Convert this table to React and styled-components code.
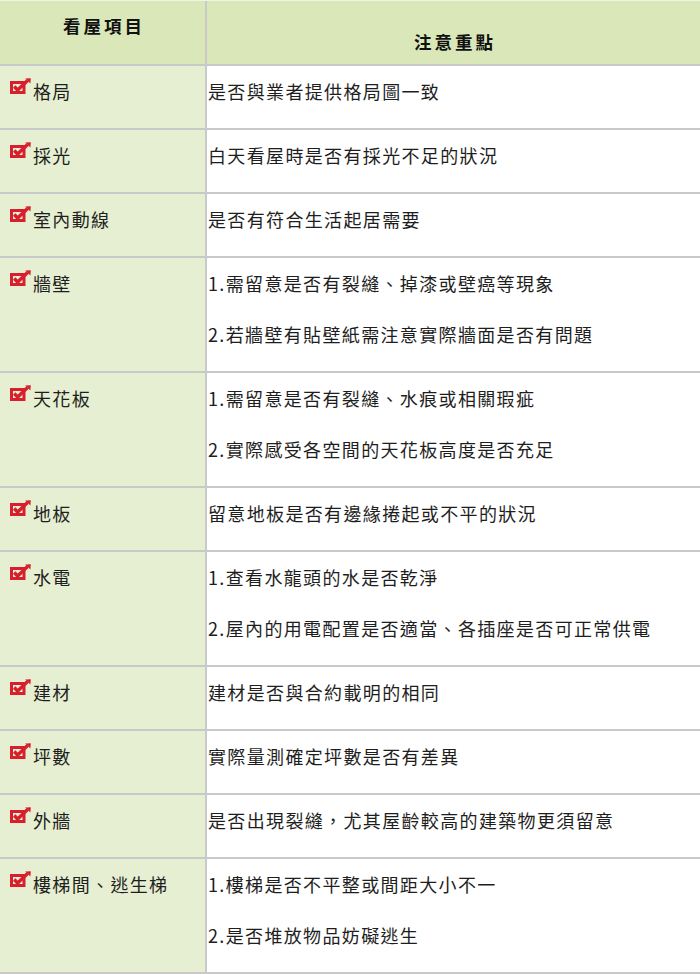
import React from "react";
import styled, { createGlobalStyle } from "styled-components";

const Global = createGlobalStyle`
  html, body { margin: 0; padding: 0; background: #fff; }
  body { font-family: "Noto Sans CJK TC", "Noto Sans", sans-serif; }
`;

const Table = styled.div`
  width: 700px;
  display: flex;
  flex-direction: column;
  border-top: 1px solid #eef3e6;
`;

const Row = styled.div`
  display: grid;
  grid-template-columns: 207px 1fr;
  border-bottom: 2px solid #c9c9c9;
`;

const HeadCell = styled.div`
  box-sizing: border-box;
  height: 63px;
  background: #d9e7b9;
  border-right: ${(p) => (p.$first ? "2px solid #c9c9c9" : "none")};
  display: flex;
  justify-content: center;
  align-items: flex-start;
  padding-top: ${(p) => p.$top}px;
  padding-left: 3px;
  font-size: 17.5px;
  font-weight: 700;
  letter-spacing: 3px;
  line-height: 24px;
  color: #111;
`;

const ItemCell = styled.div`
  box-sizing: border-box;
  background: #e6efd1;
  border-right: 2px solid #c9c9c9;
  display: flex;
  align-items: flex-start;
  gap: 2px;
  padding: 10px 0 22px 10px;
  font-size: 18px;
  line-height: 30px;
  letter-spacing: 1.35px;
  color: #1e1e1e;
`;

const Icon = styled.svg`
  flex: none;
  width: 21px;
  height: 16px;
  margin-top: 2px;
`;

const NoteCell = styled.div`
  box-sizing: border-box;
  background: #fff;
  display: flex;
  flex-direction: column;
  gap: 21px;
  padding: 10px 0 22px 1px;
  font-size: 18px;
  line-height: 30px;
  letter-spacing: 1.35px;
  color: #1e1e1e;
`;

const Line = styled.div`
  white-space: nowrap;
`;

const Check = () => (
  <Icon viewBox="0 0 21 16">
    <rect x="1.5" y="4.5" width="12.5" height="10" fill="none" stroke="#d71f2d" strokeWidth="3" />
    <path d="M4.2 8.5 L7.6 12 L17.6 2.6" fill="none" stroke="#d71f2d" strokeWidth="3.4" strokeLinecap="butt" />
    <path d="M15.2 0.6 L20.8 0.2 L20.4 5.6 Z" fill="#d71f2d" />
  </Icon>
);

const rows = [
  ["格局", ["是否與業者提供格局圖一致"]],
  ["採光", ["白天看屋時是否有採光不足的狀況"]],
  ["室內動線", ["是否有符合生活起居需要"]],
  ["牆壁", ["1.需留意是否有裂縫、掉漆或壁癌等現象", "2.若牆壁有貼壁紙需注意實際牆面是否有問題"]],
  ["天花板", ["1.需留意是否有裂縫、水痕或相關瑕疵", "2.實際感受各空間的天花板高度是否充足"]],
  ["地板", ["留意地板是否有邊緣捲起或不平的狀況"]],
  ["水電", ["1.查看水龍頭的水是否乾淨", "2.屋內的用電配置是否適當、各插座是否可正常供電"]],
  ["建材", ["建材是否與合約載明的相同"]],
  ["坪數", ["實際量測確定坪數是否有差異"]],
  ["外牆", ["是否出現裂縫，尤其屋齡較高的建築物更須留意"]],
  ["樓梯間、逃生梯", ["1.樓梯是否不平整或間距大小不一", "2.是否堆放物品妨礙逃生"]],
];

export default function App() {
  return (
    <>
      <Global />
      <Table>
        <Row>
          <HeadCell $first $top={13}>看屋項目</HeadCell>
          <HeadCell $top={29}>注意重點</HeadCell>
        </Row>
        {rows.map(([item, notes]) => (
          <Row key={item}>
            <ItemCell>
              <Check />
              <span>{item}</span>
            </ItemCell>
            <NoteCell>
              {notes.map((n) => (
                <Line key={n}>{n}</Line>
              ))}
            </NoteCell>
          </Row>
        ))}
      </Table>
    </>
  );
}
